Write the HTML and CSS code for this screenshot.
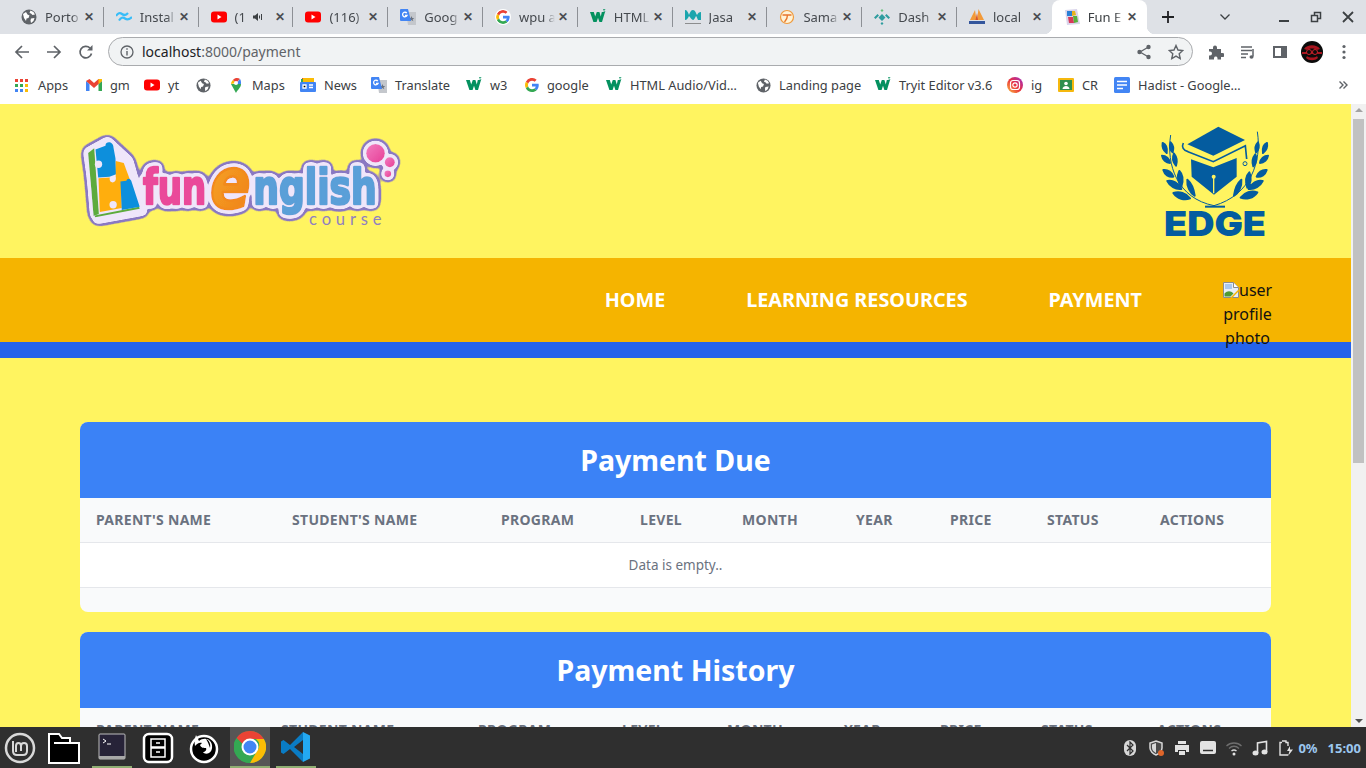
FILE: index.html
```html
<!DOCTYPE html>
<html lang="en">
<head>
    <meta charset="UTF-8">
    <meta name="viewport" content="width=device-width, initial-scale=1.0">
    <title>Fun English Course</title>
    <link rel="stylesheet" href="styles.css">
</head>
<body>
    <svg class="sprite" aria-hidden="true">
        <symbol id="globe" viewBox="0 0 16 16">
            <circle cx="8" cy="8" r="7.5" fill="#5f6368"/>
            <path fill="#fff" d="M2 5l3-2 1.500 2.500 2 1-1 2.500-2 .5-.5 2.500-2-3zM9.500 1.500l3 1.500 1.500 2.500-2.500.5-1.500-1.500-1.500-.5zM10 9.500l3.500-.5-1 3-2.500 2-.5-2.500z"/>
        </symbol>
        <symbol id="yt" viewBox="0 0 16 16">
            <rect y="2.500" width="16" height="11" rx="3" fill="#f00"/>
            <path fill="#fff" d="M6.500 5.500v5l4-2.500z"/>
        </symbol>
        <symbol id="gtranslate" viewBox="0 0 16 16">
            <path fill="#c4c7cc" d="M6 3h10v13H8z"/>
            <path fill="#6b7380" d="M11.500 7l.8 2h2l-1.600 1.300.6 2-1.800-1.200-1.800 1.200.6-2L8.700 9h2z"/>
            <path fill="#4285f4" d="M1 0h7l3 12H1a1 1 0 0 1-1-1V1a1 1 0 0 1 1-1z"/>
            <path fill="none" stroke="#fff" stroke-width="1.300" d="M6.800 4.200A2.300 2.300 0 1 0 7 6.500H5"/>
        </symbol>
        <symbol id="w3" viewBox="0 0 16 16">
            <path fill="#04915f" d="M0 3h3.800l1.400 4.500L6.800 3h2.600l1.400 4.500L11.800 3h3.200L12 13H9.400L8 8.800 6.600 13H3.400z"/>
            <path fill="none" stroke="#04915f" stroke-width=".7" d="M13 .5h2l-1 1 1 1-1 .7h-1"/>
        </symbol>
        <symbol id="google" viewBox="0 0 16 16">
            <path fill="#ea4335" d="M8 3.200c1.200 0 2.200.4 3 1.200l2.300-2.300A7.800 7.800 0 0 0 1 4.300l2.700 2.100C4.300 4.500 6 3.200 8 3.200z"/>
            <path fill="#4285f4" d="M15.700 8.200c0-.6-.1-1.100-.2-1.600H8v3h4.300c-.2 1-.8 1.800-1.600 2.400l2.600 2c1.500-1.400 2.400-3.400 2.400-5.800z"/>
            <path fill="#fbbc05" d="M3.700 9.600A4.800 4.800 0 0 1 3.700 6.400L1 4.300a7.900 7.900 0 0 0 0 7.400z"/>
            <path fill="#34a853" d="M8 16c2.200 0 4-.7 5.300-2l-2.600-2c-.7.500-1.600.8-2.700.8-2 0-3.700-1.300-4.300-3.200L1 11.700A8 8 0 0 0 8 16z"/>
        </symbol>
    </svg>

    <div class="screen">
        <div class="tabstrip">
            <div class="tab"><svg class="favicon"><use href="#globe"/></svg><span class="tab-title">Porto</span><span class="tab-close">✕</span></div>
            <div class="tab">
                <svg class="favicon" viewBox="0 0 16 16"><path fill="none" stroke="#38bdf8" stroke-width="2.200" d="M0 7c2-3 4-3.500 6-2s4 1.500 6-1M3 11.500c2-3 4-3.500 6-2s4 1.500 7-1.500"/></svg>
                <span class="tab-title">Instal</span><span class="tab-close">✕</span>
            </div>
            <div class="tab">
                <svg class="favicon"><use href="#yt"/></svg><span class="tab-title tab-title-short">(1</span>
                <svg class="tab-audio" viewBox="0 0 10 10"><path fill="#3c4043" d="M0 3.500h2L5 1v8L2 6.500H0z"/><path fill="none" stroke="#3c4043" d="M6.500 3.500v3M8.500 2v6"/></svg>
                <span class="tab-close">✕</span>
            </div>
            <div class="tab"><svg class="favicon"><use href="#yt"/></svg><span class="tab-title">(116)</span><span class="tab-close">✕</span></div>
            <div class="tab"><svg class="favicon"><use href="#gtranslate"/></svg><span class="tab-title">Goog</span><span class="tab-close">✕</span></div>
            <div class="tab"><svg class="favicon favicon-chip"><use href="#google"/></svg><span class="tab-title">wpu a</span><span class="tab-close">✕</span></div>
            <div class="tab"><svg class="favicon"><use href="#w3"/></svg><span class="tab-title">HTML</span><span class="tab-close">✕</span></div>
            <div class="tab">
                <svg class="favicon" viewBox="0 0 16 16"><path fill="#1aa5ad" d="M0 1c2 0 3 2 4 5 1-3 2-5 4-5 2 0 3 3 4 5 1-2 2-3 4-3v8h-3c-1-2-1-3-2-4-1 2-2 4-3 4S5 8 4 7c-1 2-2 4-4 4z"/><path stroke="#777" stroke-width=".8" d="M0 14.500h16"/></svg>
                <span class="tab-title">Jasa</span><span class="tab-close">✕</span>
            </div>
            <div class="tab">
                <svg class="favicon" viewBox="0 0 16 16"><circle cx="8" cy="8" r="6.500" fill="#fff3d6" stroke="#ef9a3c" stroke-width="1.200"/><path fill="none" stroke="#e8762c" stroke-width="1.400" d="M3.500 6h9M8.500 6c0 3-1 5-3 7"/></svg>
                <span class="tab-title">Sama</span><span class="tab-close">✕</span>
            </div>
            <div class="tab">
                <svg class="favicon" viewBox="0 0 16 16"><path fill="#2f9d9f" d="M8 5l3.500 3.500L8 12 4.500 8.500zM8 13l1.500 1.500L8 16l-1.500-1.500zM3.500 5L5 6.500 1.500 10 0 8.500zM12.500 5L16 8.500 14.500 10 11 6.500z"/><path fill="#64c07a" d="M8 0l1.500 1.500L8 3 6.500 1.500z"/></svg>
                <span class="tab-title">Dash</span><span class="tab-close">✕</span>
            </div>
            <div class="tab tab-no-sep">
                <svg class="favicon" viewBox="0 0 16 16"><path fill="#f29a3a" d="M1 11L6 1l1.500 10zM8 11L9.500 0 15 11z"/><path fill="#d8562a" d="M6.500 11L8 4l1 7z"/><path fill="#34569c" d="M0 12h16v3H0z"/></svg>
                <span class="tab-title">local</span><span class="tab-close">✕</span>
            </div>
            <div class="tab tab-active">
                <svg class="favicon" viewBox="0 0 16 16"><path fill="#d9d4ea" d="M1 1l12-1 3 15-13 1z"/><path fill="#2a7fd6" d="M3 2h5v5H3z"/><path fill="#e8b21c" d="M8 2l3 0 1 4-4 1z"/><path fill="#d93a5a" d="M4 8h5l1 6H5z"/><path fill="#58b03c" d="M9 7h4l1 6-4 1z"/></svg>
                <span class="tab-title">Fun E</span><span class="tab-close">✕</span>
            </div>
            <svg class="strip-plus" viewBox="0 0 12 12"><path stroke="#202124" stroke-width="1.800" d="M6 0v12M0 6h12"/></svg>
            <div class="window-controls">
                <svg class="win-chevron" viewBox="0 0 10 6"><path fill="none" stroke="#3c4043" stroke-width="1.300" d="M.5.500L5 5 9.500.500"/></svg>
                <svg class="win-btn" viewBox="0 0 12 12"><path stroke="#3c4043" stroke-width="2" d="M1 10h10"/></svg>
                <svg class="win-btn" viewBox="0 0 12 12"><path fill="none" stroke="#3c4043" stroke-width="1.500" d="M1.500 4.500h6v6h-6zM4.500 4V1.500h6v6H8"/></svg>
                <svg class="win-btn" viewBox="0 0 12 12"><path stroke="#3c4043" stroke-width="1.800" d="M1 1l10 10M11 1L1 11"/></svg>
            </div>
        </div>

        <div class="toolbar">
            <svg class="tool-icon" viewBox="0 0 16 16"><path fill="none" stroke="#5f6368" stroke-width="1.700" d="M15 8H2M8 2L2 8l6 6"/></svg>
            <svg class="tool-icon" viewBox="0 0 16 16"><path fill="none" stroke="#5f6368" stroke-width="1.700" d="M1 8h13M8 2l6 6-6 6"/></svg>
            <svg class="tool-icon" viewBox="0 0 16 16"><path fill="none" stroke="#5f6368" stroke-width="1.700" d="M13.500 9.500A5.800 5.800 0 1 1 12 4"/><path fill="#5f6368" d="M14.500 1v5.500H9z"/></svg>
            <div class="omnibox">
                <svg class="omni-info" viewBox="0 0 14 14"><circle cx="7" cy="7" r="6" fill="none" stroke="#5f6368" stroke-width="1.300"/><path stroke="#5f6368" stroke-width="1.400" d="M7 6v4.500M7 3.300v1.500"/></svg>
                <span class="omni-url"><span class="omni-host">localhost</span>:8000/payment</span>
                <svg class="omni-action" viewBox="0 0 16 16"><path fill="none" stroke="#5f6368" stroke-width="1.300" d="M12.500 3L4 8l8.500 5"/><circle cx="12.500" cy="3" r="2.200" fill="#5f6368"/><circle cx="12.500" cy="13" r="2.200" fill="#5f6368"/><circle cx="3.500" cy="8" r="2.200" fill="#5f6368"/></svg>
                <svg class="omni-action" viewBox="0 0 16 16"><path fill="none" stroke="#5f6368" stroke-width="1.400" d="M8 1.500l2 4.500 4.800.5-3.600 3.200 1 4.800L8 12.100l-4.200 2.400 1-4.800L1.200 6.500 6 6z"/></svg>
            </div>
            <svg class="tool-icon tool-icon-first" viewBox="0 0 16 16"><path fill="#5f6368" d="M1 5h4V3.500a2 2 0 0 1 4 0V5h4v4h1.500a2 2 0 0 1 0 4H13v2.500H9.500V14a1.800 1.800 0 0 0-3.500 0v1.500H1v-4h1a2 2 0 0 0 0-4H1z"/></svg>
            <svg class="tool-icon" viewBox="0 0 16 16"><path stroke="#5f6368" stroke-width="1.400" d="M1 3h11M1 6.500h11M1 10h7M1 13.500h5"/><path fill="none" stroke="#5f6368" stroke-width="1.500" d="M13 5v7.500"/><ellipse cx="11.500" cy="13" rx="2" ry="1.700" fill="#5f6368"/></svg>
            <svg class="tool-icon" viewBox="0 0 16 16"><path fill="none" stroke="#5f6368" stroke-width="2" d="M2 3h12v10H2z"/><path fill="#5f6368" d="M9 3h5v10H9z"/></svg>
            <svg class="tool-avatar" viewBox="0 0 22 22"><circle cx="11" cy="11" r="11" fill="#0b0b0b"/><path fill="#a9141e" d="M3 8c3-5 13-5 16 0l-3 1c-2-2-8-2-10 0zM1 11h20v2H1zM6 15c2 2 8 2 10 0l1 2c-3 3-9 3-12 0z"/><circle cx="8" cy="11" r="2.500" fill="#0b0b0b" stroke="#c8202a"/><circle cx="14" cy="11" r="2.500" fill="#0b0b0b" stroke="#c8202a"/></svg>
            <svg class="tool-icon" viewBox="0 0 16 16"><circle cx="8" cy="2.500" r="1.600" fill="#5f6368"/><circle cx="8" cy="8" r="1.600" fill="#5f6368"/><circle cx="8" cy="13.500" r="1.600" fill="#5f6368"/></svg>
        </div>

        <div class="bookmarks">
            <div class="bm">
                <svg class="bm-icon bm-icon-small" viewBox="0 0 13 13"><path fill="#ea4335" d="M0 0h3v3H0zM5 0h3v3H5zM10 0h3v3h-3z"/><path fill="#34a853" d="M0 5h3v3H0zM5 5h3v3H5z"/><path fill="#fbbc05" d="M10 5h3v3h-3zM10 10h3v3h-3z"/><path fill="#4285f4" d="M0 10h3v3H0zM5 10h3v3H5z"/></svg>
                <span>Apps</span>
            </div>
            <div class="bm">
                <svg class="bm-icon" viewBox="0 0 16 16"><path fill="#4285f4" d="M0 4v10h3.500V7z"/><path fill="#34a853" d="M12.500 7v7H16V4z"/><path fill="#ea4335" d="M0 4l3.500-2L8 6l4.500-4L16 4l-3.500 3L8 11 3.500 7z"/><path fill="#fbbc05" d="M12.500 2L16 2v2l-3.500 3z"/></svg>
                <span>gm</span>
            </div>
            <div class="bm"><svg class="bm-icon"><use href="#yt"/></svg><span>yt</span></div>
            <div class="bm"><svg class="bm-icon bm-icon-globe"><use href="#globe"/></svg></div>
            <div class="bm">
                <svg class="bm-icon" viewBox="0 0 16 16"><path fill="#34a853" d="M3 7l5 9c1-3 5-5 5-9z"/><path fill="#fbbc05" d="M3 7c0-2 1-3 2-4l3 3z"/><path fill="#ea4335" d="M5 3c2-2.500 5-2.500 7-1L8 6z"/><path fill="#4285f4" d="M12 2c1 1 1 3 1 5H8z"/><circle cx="8" cy="6" r="2" fill="#fff"/></svg>
                <span>Maps</span>
            </div>
            <div class="bm">
                <svg class="bm-icon" viewBox="0 0 16 16"><path fill="#ea4335" d="M2 1h10l1 3H2z"/><path fill="#34a853" d="M1 2h12v3H1z"/><path fill="#fbbc05" d="M3 1h11v5H3z"/><rect y="5" width="16" height="10" rx="1" fill="#4285f4"/><path stroke="#fff" stroke-width="1.300" d="M9 8h4M9 10.500h4M3 8h3v3H3z"/></svg>
                <span>News</span>
            </div>
            <div class="bm"><svg class="bm-icon"><use href="#gtranslate"/></svg><span>Translate</span></div>
            <div class="bm"><svg class="bm-icon"><use href="#w3"/></svg><span>w3</span></div>
            <div class="bm"><svg class="bm-icon bm-icon-google"><use href="#google"/></svg><span>google</span></div>
            <div class="bm"><svg class="bm-icon"><use href="#w3"/></svg><span>HTML Audio/Vid…</span></div>
            <div class="bm"><svg class="bm-icon bm-icon-globe"><use href="#globe"/></svg><span>Landing page</span></div>
            <div class="bm"><svg class="bm-icon"><use href="#w3"/></svg><span>Tryit Editor v3.6</span></div>
            <div class="bm">
                <svg class="bm-icon" viewBox="0 0 16 16"><defs><linearGradient id="ig" x1="0" y1="1" x2="1" y2="0"><stop offset="0" stop-color="#fdc13c"/><stop offset=".5" stop-color="#e8303e"/><stop offset="1" stop-color="#9b2fd0"/></linearGradient></defs><circle cx="8" cy="8" r="8" fill="url(#ig)"/><rect x="3.500" y="3.500" width="9" height="9" rx="2.500" fill="none" stroke="#fff" stroke-width="1.200"/><circle cx="8" cy="8" r="2.200" fill="none" stroke="#fff" stroke-width="1.200"/></svg>
                <span>ig</span>
            </div>
            <div class="bm">
                <svg class="bm-icon" viewBox="0 0 16 16"><rect width="16" height="14" y="1" rx="1" fill="#f5b80e"/><rect x="2" y="3" width="12" height="10" fill="#2f8f4e"/><circle cx="8" cy="6.500" r="1.800" fill="#fff"/><path fill="#fff" d="M4.500 12c0-2 2-3 3.500-3s3.500 1 3.500 3z"/></svg>
                <span>CR</span>
            </div>
            <div class="bm">
                <svg class="bm-icon" viewBox="0 0 16 16"><rect width="16" height="16" rx="1.500" fill="#4285f4"/><path stroke="#fff" stroke-width="1.600" d="M3 4.500h10M3 8h10M3 11.500h6"/></svg>
                <span>Hadist - Google…</span>
            </div>
            <svg class="bm-more" viewBox="0 0 9 8"><path fill="none" stroke="#5f6368" stroke-width="1.400" d="M.5.500L4 4 .5 7.500M4.500.500L8 4 4.500 7.500"/></svg>
        </div>

        <div class="viewport">
            <div class="page">
                <header class="site-header">
                    <svg class="logo-fun" viewBox="30 30 960 280">
                        <defs>
                            <filter id="logo-outline" filterUnits="userSpaceOnUse" x="0" y="0" width="1020" height="345">
                                <feGaussianBlur in="SourceAlpha" stdDeviation="7" result="b1"/>
                                <feComponentTransfer in="b1" result="inner"><feFuncA type="linear" slope="30" intercept="-1"/></feComponentTransfer>
                                <feGaussianBlur in="SourceAlpha" stdDeviation="11" result="b2"/>
                                <feComponentTransfer in="b2" result="outer"><feFuncA type="linear" slope="30" intercept="-0.6"/></feComponentTransfer>
                                <feFlood flood-color="#8a78c2"/>
                                <feComposite in2="outer" operator="in" result="purple"/>
                                <feFlood flood-color="#efe6fa"/>
                                <feComposite in2="inner" operator="in" result="lilac"/>
                                <feMerge><feMergeNode in="purple"/><feMergeNode in="lilac"/><feMergeNode in="SourceGraphic"/></feMerge>
                            </filter>
                            <linearGradient id="logo-orange" x1="0" y1="0" x2="1" y2="1"><stop offset="0" stop-color="#f7a823"/><stop offset="1" stop-color="#ee7e1c"/></linearGradient>
                            <linearGradient id="logo-pink" x1="0" y1="0" x2="1" y2="1"><stop offset="0" stop-color="#f27cc0"/><stop offset="1" stop-color="#e73f96"/></linearGradient>
                        </defs>
                        <g filter="url(#logo-outline)">
                            <path fill="#efe6fa" d="M48 80L112 44 178 105 222 262 78 288z"/>
                            <path fill="#5cab3c" d="M53 84l18-14 14 198-16 6z"/>
                            <path fill="#5cab3c" d="M72 272l134-26 2 6-134 26z"/>
                            <path fill="#0d8fdc" d="M75 74l30-12c0-14 24-14 24 6l6 32 2 48-20 8-34 2z"/>
                            <path fill="#ffae0c" d="M84 160l34-2c-4 20 22 20 18-2l16-2 2 96-66 12z"/>
                            <path fill="#ffae0c" d="M136 108l24 6 22 60-28 0-18-20z"/>
                            <path fill="#0d8fdc" d="M150 170l18-2c2-10 14-8 16 4l24 74-54 10z"/>
                            <circle cx="84" cy="118" r="11" fill="#efe6fa"/>
                            <circle cx="128" cy="240" r="11" fill="#efe6fa"/>
                            <text class="logo-word logo-word-pink" x="218" y="238" textLength="190" lengthAdjust="spacingAndGlyphs">fun</text>
                            <text class="logo-word logo-word-e" x="420" y="250" textLength="122" lengthAdjust="spacingAndGlyphs">e</text>
                            <text class="logo-word logo-word-blue" x="550" y="238" textLength="372" lengthAdjust="spacingAndGlyphs">nglish</text>
                            <circle cx="918" cy="85" r="28" fill="url(#logo-pink)"/>
                            <circle cx="961" cy="112" r="15" fill="url(#logo-pink)"/>
                            <circle cx="955" cy="147" r="10" fill="url(#logo-pink)"/>
                        </g>
                        <text class="logo-course" x="718" y="300" textLength="218">course</text>
                    </svg>
                    <svg class="logo-edge" viewBox="60 30 330 336">
                        <g fill="#045c9f">
                            <path d="M235 35l80 40-95 47-78-34z"/>
                            <path d="M153 133l67 24 70-28v56l-68 54-67-54z"/>
                            <path fill="none" stroke="#045c9f" stroke-width="5" d="M130 84c-6 12 0 22 14 26l76 30 96-48 4 40"/>
                            <circle cx="315" cy="146" r="6" fill="none" stroke="#045c9f" stroke-width="3"/>
                            <path fill="none" stroke="#fff460" stroke-width="4" d="M221 187v48"/>
                            <circle cx="221" cy="185" r="6" fill="#fff460"/>
                            <path fill="none" stroke="#045c9f" stroke-width="3" d="M92 60c-14 90 20 190 130 212"/>
                            <path class="laurel" d="M68 84c12 6 14 18 12 30-8-6-14-18-12-30zM92 82c8 8 10 16 6 30-8-8-10-20-6-30zM66 122c12 0 22 10 24 22-12 0-22-10-24-22zM102 116c8 10 10 24 6 36-8-10-12-24-6-36zM70 165c14-2 26 8 30 20-14 2-26-6-30-20zM118 168c10 10 12 28 6 46-10-12-14-30-6-46zM82 198c16-4 34 6 42 24-18 2-34-8-42-24zM142 194c14 12 20 32 22 48-14-8-24-28-22-48zM100 234c18-6 38 0 50 16-16 6-38 2-50-16z"/>
                            <path fill="none" stroke="#045c9f" stroke-width="3" d="M352 50c14 90-20 190-130 222"/>
                            <path class="laurel" d="M381 84c-12 6-14 18-12 30 8-6 14-18 12-30zM354 82c-8 8-10 16-6 30 8-8 10-20 6-30zM384 122c-12 0-22 10-24 22 12 0 22-10 24-22zM346 118c-8 10-10 24-6 36 8-10 12-24 6-36zM380 165c-14-2-26 8-30 20 14 2 26-6 30-20zM328 172c-10 10-12 28-6 46 10-12 14-30 6-46zM368 198c-16-4-34 6-42 24 18 2 34-8 42-24zM304 194c-14 12-20 32-22 48 14-8 24-28 22-48zM352 232c-18-6-38 0-50 16 16 6 38 2 50-16z"/>
                            <path d="M195 272h60v6h-60z"/>
                        </g>
                        <text class="logo-edge-text" x="72" y="362" textLength="306" lengthAdjust="spacingAndGlyphs">EDGE</text>
                    </svg>
                </header>

                <nav class="site-nav">
                    <a href="#">HOME</a>
                    <a href="#">LEARNING RESOURCES</a>
                    <a href="#">PAYMENT</a>
                    <span class="profile-alt">
                        <span class="profile-alt-first"><svg class="broken-img" viewBox="0 0 16 16"><path fill="#e8eef6" stroke="#8c8c8c" d="M.5.500h10l5 5v10H.5z"/><path fill="#fff" stroke="#8c8c8c" d="M10.500.5v5h5"/><path fill="#a9c8ee" d="M2 2h7v5H2z"/><path fill="#4f9a34" d="M1.500 14.500v-3c3-3 6-3 9 0l-3 3z"/><path stroke="#f5b400" stroke-width="1.500" d="M8 16L16 8"/></svg>user</span> profile photo
                    </span>
                </nav>

                <main class="content">
                    <section class="card">
                        <h2 class="card-title">Payment Due</h2>
                        <table class="data-table due-table">
                            <colgroup>
                                <col class="c1"><col class="c2"><col class="c3"><col class="c4"><col class="c5"><col class="c6"><col class="c7"><col class="c8"><col class="c9">
                            </colgroup>
                            <thead>
                                <tr>
                                    <th>Parent's Name</th>
                                    <th>Student's Name</th>
                                    <th>Program</th>
                                    <th>Level</th>
                                    <th>Month</th>
                                    <th>Year</th>
                                    <th>Price</th>
                                    <th>Status</th>
                                    <th>Actions</th>
                                </tr>
                            </thead>
                            <tbody>
                                <tr><td colspan="9">Data is empty..</td></tr>
                            </tbody>
                        </table>
                        <div class="card-foot"></div>
                    </section>

                    <section class="card">
                        <h2 class="card-title">Payment History</h2>
                        <table class="data-table history-table">
                            <colgroup>
                                <col class="c1"><col class="c2"><col class="c3"><col class="c4"><col class="c5"><col class="c6"><col class="c7"><col class="c8"><col class="c9">
                            </colgroup>
                            <thead>
                                <tr>
                                    <th>Parent Name</th>
                                    <th>Student Name</th>
                                    <th>Program</th>
                                    <th>Level</th>
                                    <th>Month</th>
                                    <th>Year</th>
                                    <th>Price</th>
                                    <th>Status</th>
                                    <th>Actions</th>
                                </tr>
                            </thead>
                        </table>
                    </section>
                </main>
            </div>
            <div class="scrollbar">
                <span class="scroll-arrow scroll-arrow-up"></span>
                <span class="scroll-thumb"></span>
                <span class="scroll-arrow scroll-arrow-down"></span>
            </div>
        </div>

        <div class="taskbar">
            <div class="task-item">
                <svg class="task-icon" viewBox="0 0 32 32"><circle cx="16" cy="16" r="14" fill="none" stroke="#d8d8d8" stroke-width="2.500"/><path fill="none" stroke="#d8d8d8" stroke-width="2" d="M9 9v10c0 3 2 4 4 4h6c3 0 4-2 4-4v-5c0-4-6-4-6 0v5M17 14c0-4-5-4-5 0v6"/></svg>
            </div>
            <div class="task-item task-folder">
                <svg class="task-icon" viewBox="0 0 32 32"><path fill="#000" stroke="#fff" stroke-width="2" d="M1 2h10l3 4h8v5h9v20H1z"/><path fill="none" stroke="#fff" stroke-width="2" d="M6 11h25"/></svg>
            </div>
            <div class="task-item task-open">
                <svg class="task-icon" viewBox="0 0 32 32"><rect x="3" y="3" width="26" height="25" rx="1" fill="#272338" stroke="#bdbdbd"/><path fill="#a8a8a8" d="M3 25h26v3H3z"/><path fill="none" stroke="#fff" d="M7 8l3 2-3 2M11 13h4"/></svg>
            </div>
            <div class="task-item">
                <svg class="task-icon" viewBox="0 0 32 32"><rect x="2" y="2" width="28" height="28" rx="5" fill="#000" stroke="#fff" stroke-width="2.500"/><path fill="none" stroke="#fff" stroke-width="1.500" d="M9 7h14v8H9zM9 16h14v9H9zM14 11h4M14 20h4"/></svg>
            </div>
            <div class="task-item">
                <svg class="task-icon" viewBox="0 0 32 32"><circle cx="16" cy="17" r="13" fill="#000" stroke="#fff" stroke-width="2.500"/><path fill="#fff" d="M8 3l3 6c3-3 9-3 11 0 3 3 3 10-1 12-2 1-5 1-6-1 2 0 4-2 3-4-2 0-5 0-6-3l2-2c-3-1-5 1-7 3-1-4 0-8 1-11z"/><path fill="#000" d="M18 7c3 1 5 5 4 9-1-3-2-6-4-9z"/></svg>
            </div>
            <div class="task-item task-open task-active">
                <svg class="task-icon" viewBox="0 0 32 32"><circle cx="16" cy="16" r="16" fill="#34a853"/><path fill="#ea4335" d="M16 0a16 16 0 0 1 13.900 8H16a8 8 0 0 0-7.500 5L2.500 7A16 16 0 0 1 16 0z"/><path fill="#fbbc05" d="M29.900 8A16 16 0 0 1 16 32l7-12a8 8 0 0 0-1-12z"/><path fill="#34a853" d="M2.500 7l6 6a8 8 0 0 0 9 11L16 32A16 16 0 0 1 2.500 7z"/><circle cx="16" cy="16" r="7.500" fill="#4285f4" stroke="#fff" stroke-width="2"/></svg>
            </div>
            <div class="task-item task-open">
                <svg class="task-icon" viewBox="0 0 32 32"><path fill="#0a7cc4" d="M23 1L10 14 3.500 9 1 10.500v11L3.500 23 10 18l13 13zM23 9v14l-9-7z"/><path fill="#23a9f2" d="M23 1l7 3.500v23L23 31z"/></svg>
            </div>
            <div class="tray">
                <svg class="tray-icon" viewBox="0 0 12 16"><rect width="12" height="16" rx="6" fill="#d8d8d8"/><path fill="none" stroke="#2f2f2f" stroke-width="1.200" d="M3 5l6 6-3 3V2l3 3-6 6"/></svg>
                <svg class="tray-icon" viewBox="0 0 16 16"><path fill="#4a4a4a" stroke="#d8d8d8" stroke-width="1.500" d="M8 1l6 2v5c0 3-3 6-6 7-3-1-6-4-6-7V3z"/><path fill="#d8d8d8" d="M8 3v10c-2-1-4-3-4-5V4.500z"/><circle cx="13" cy="13" r="3" fill="#e0662a"/></svg>
                <svg class="tray-icon" viewBox="0 0 16 16"><path fill="#e2e2e2" d="M4 1h8v3H4zM1 5h14v7h-3v-2H4v2H1zM5 11h6v4H5z"/></svg>
                <svg class="tray-icon" viewBox="0 0 16 16"><rect y="1" width="16" height="13" rx="2" fill="#e2e2e2"/><path stroke="#2f2f2f" stroke-width="1.500" d="M3 10.500h10"/></svg>
                <svg class="tray-icon" viewBox="0 0 16 16"><path fill="none" stroke="#6e6e6e" stroke-width="1.300" d="M.5 6c4-4 11-4 15 0M3 8.500c3-3 7-3 10 0"/><path fill="none" stroke="#d8d8d8" stroke-width="1.500" d="M5.500 11c1.500-1.200 3.500-1.200 5 0"/><circle cx="8" cy="14" r="1.500" fill="#e2e2e2"/></svg>
                <svg class="tray-icon" viewBox="0 0 16 16"><path fill="none" stroke="#e2e2e2" stroke-width="1.600" d="M5.500 13V3l9-1.500V12"/><ellipse cx="3.500" cy="13" rx="3" ry="2.500" fill="#e2e2e2"/><ellipse cx="12.500" cy="12" rx="3" ry="2.500" fill="#e2e2e2"/></svg>
                <svg class="tray-icon" viewBox="0 0 14 16"><path fill="none" stroke="#e2e2e2" stroke-width="1.400" d="M3 1h4v1.500h2V6M9 15H1V2.500h2"/><path fill="#e2e2e2" d="M11 6l-3 5h2.500L9 16l5-6.500h-3z"/></svg>
                <span class="tray-text tray-percent">0%</span>
                <span class="tray-text tray-time">15:00</span>
            </div>
        </div>
    </div>
</body>
</html>
```
FILE: styles.css
```css
* {
    box-sizing: border-box;
}

html, body {
    margin: 0;
    padding: 0;
    height: 100%;
    overflow: hidden;
}

body {
    font-family: "Noto Sans", "Open Sans", sans-serif;
    background-color: #2f2f2f;
}

.sprite {
    display: none;
}

.screen {
    display: flex;
    flex-direction: column;
    width: 1366px;
    height: 768px;
    overflow: hidden;
}

/* browser tabs */
.tabstrip {
    display: flex;
    align-items: center;
    flex: 0 0 34px;
    padding-left: 9px;
    background-color: #dee1e6;
}

.tab {
    position: relative;
    display: flex;
    align-items: center;
    flex: 0 0 94.8px;
    min-width: 0;
    height: 34px;
    padding: 0 7px 0 12px;
    font-size: 13px;
    color: #45494e;
}

.tab::after {
    content: "";
    position: absolute;
    right: 0;
    top: 7px;
    width: 1px;
    height: 20px;
    background-color: #8d9095;
}

.tab-no-sep::after {
    display: none;
}

.tab-active {
    background-color: #fff;
    border-radius: 8px 8px 0 0;
    color: #3c4043;
}

/* the two small flares at the foot of the open tab */
.tab-active::before,
.tab-active::after {
    content: "";
    position: absolute;
    top: auto;
    bottom: 0;
    width: 8px;
    height: 8px;
    background-color: transparent;
}

.tab-active::before {
    left: -8px;
    background-image: radial-gradient(circle at 0 0, transparent 8px, #fff 8.5px);
}

.tab-active::after {
    right: -8px;
    background-image: radial-gradient(circle at 100% 0, transparent 8px, #fff 8.5px);
}

.favicon {
    flex: 0 0 16px;
    width: 16px;
    height: 16px;
}

.favicon-chip {
    padding: 1px;
    background-color: #fff;
    border-radius: 50%;
}

.tab-title {
    flex: 1;
    min-width: 0;
    margin-left: 8px;
    overflow: hidden;
    white-space: nowrap;
    -webkit-mask-image: linear-gradient(90deg, #000 75%, transparent);
    mask-image: linear-gradient(90deg, #000 75%, transparent);
}

.tab-title-short {
    flex: 0 0 12px;
}

.tab-audio {
    flex: 0 0 10px;
    width: 10px;
    height: 10px;
    margin: 0 9px 0 6px;
}

.tab-close {
    flex: 0 0 16px;
    font-size: 12px;
    font-weight: 700;
    line-height: 16px;
    text-align: center;
    color: #4a4d52;
}

.strip-plus {
    width: 12px;
    height: 12px;
    margin-left: 15px;
}

.window-controls {
    display: flex;
    align-items: center;
    margin-left: auto;
    padding-right: 12px;
}

.win-chevron {
    width: 10px;
    height: 6px;
    margin-right: 28px;
}

.win-btn {
    width: 12px;
    height: 12px;
    margin-left: 20px;
}

/* address bar */
.toolbar {
    display: flex;
    align-items: center;
    flex: 0 0 35px;
    padding-left: 14px;
    background-color: #fff;
}

.tool-icon {
    flex: 0 0 16px;
    width: 16px;
    height: 16px;
    margin-right: 16px;
}

.tool-icon-first {
    margin-left: 15px;
}

.tool-avatar {
    flex: 0 0 22px;
    width: 22px;
    height: 22px;
    margin: 0 13px 0 -3px;
}

.omnibox {
    display: flex;
    align-items: center;
    flex: 0 0 1085px;
    height: 29px;
    margin-left: -2px;
    padding: 0 8px 0 11px;
    background-color: #f1f3f4;
    border: 1px solid #a9abae;
    border-radius: 15px;
}

.omni-info {
    width: 14px;
    height: 14px;
    margin-right: 8px;
}

.omni-url {
    flex: 1;
    font-size: 14px;
    color: #5f6368;
}

.omni-host {
    color: #202124;
}

.omni-action {
    width: 16px;
    height: 16px;
    margin-left: 16px;
}

/* bookmarks */
.bookmarks {
    display: grid;
    grid-template-columns: 71px 58px 52px 32px 72px 71px 95px 59px 81px 150px 119px 132px 51px 56px 130px auto;
    align-items: center;
    flex: 0 0 35px;
    padding: 0 0 3px 15px;
    font-size: 12.8px;
    background-color: #fff;
    color: #3c4043;
}

.bm {
    display: flex;
    align-items: center;
    white-space: nowrap;
}

.bm-icon {
    flex: 0 0 16px;
    width: 16px;
    height: 16px;
    margin-right: 8px;
}

.bm-icon-small {
    flex-basis: 13px;
    width: 13px;
    height: 13px;
    margin-right: 10px;
}

.bm-icon-globe {
    flex-basis: 15px;
    width: 15px;
    height: 15px;
}

.bm-icon-google {
    flex-basis: 14px;
    width: 14px;
    height: 14px;
}

.bm-more {
    justify-self: start;
    width: 9px;
    height: 8px;
    margin-left: 95px;
}

/* page */
.viewport {
    display: flex;
    flex: 1;
    min-height: 0;
}

.page {
    flex: 1;
    min-width: 0;
    overflow: hidden;
    background-color: #fff460;
}

.site-header {
    display: flex;
    align-items: center;
    justify-content: space-between;
    height: 154px;
    padding: 0 81px 0 80px;
}

.logo-fun {
    width: 320px;
    height: 93px;
    overflow: visible;
}

.logo-word {
    font-family: "DejaVu Sans", sans-serif;
    font-weight: 700;
    font-size: 145px;
    stroke-width: 8px;
    stroke-linejoin: round;
}

.logo-word-pink {
    fill: #ea4a9a;
    stroke: #ea4a9a;
}

.logo-word-e {
    font-size: 215px;
    font-style: italic;
    fill: url(#logo-orange);
    stroke: #f28a1a;
}

.logo-word-blue {
    fill: #5a9fd8;
    stroke: #5a9fd8;
}

.logo-course {
    font-family: "Lato", sans-serif;
    font-size: 50px;
    fill: #8f80c0;
}

.logo-edge {
    width: 110px;
    height: 112px;
}

.laurel {
    stroke: #045c9f;
    stroke-width: 6px;
    stroke-linejoin: round;
}

.logo-edge-text {
    font-family: "Inter", sans-serif;
    font-weight: 900;
    font-size: 104px;
    fill: #045c9f;
}

.site-nav {
    display: flex;
    align-items: center;
    justify-content: flex-end;
    gap: 81px;
    height: 100px;
    padding: 0 79px 0 80px;
    background-color: #f5b400;
    border-bottom: 16px solid #2563eb;
}

.site-nav a {
    margin-top: -2px;
    font-size: 19.8px;
    font-weight: 700;
    color: #fff;
    text-decoration: none;
}

.profile-alt {
    width: 49px;
    height: 44px;
    font-size: 16px;
    line-height: 24px;
    text-align: center;
    color: #111;
}

.profile-alt-first {
    white-space: nowrap;
}

.broken-img {
    width: 16px;
    height: 16px;
    vertical-align: -2px;
}

.content {
    display: flex;
    flex-direction: column;
    gap: 20px;
    padding: 64px 80px 0;
}

.card {
    overflow: hidden;
    background-color: #f9fafb;
    border-radius: 8px;
}

.card-title {
    margin: 0;
    height: 76px;
    font-size: 28.5px;
    font-weight: 700;
    line-height: 76px;
    text-align: center;
    color: #fff;
    background-color: #3b82f6;
}

.data-table {
    width: 100%;
    border-collapse: collapse;
    table-layout: fixed;
}

.data-table th {
    height: 44px;
    padding: 0 0 0 16px;
    font-size: 14px;
    font-weight: 700;
    letter-spacing: .3px;
    text-align: left;
    text-transform: uppercase;
    white-space: nowrap;
    color: #6b7280;
    background-color: #f9fafb;
    border-bottom: 1px solid #e5e7eb;
}

.data-table td {
    height: 45px;
    padding: 0;
    font-size: 13.5px;
    text-align: center;
    color: #6b7280;
    background-color: #fff;
    border-bottom: 1px solid #e5e7eb;
}

.due-table .c1 { width: 196px; }
.due-table .c2 { width: 209px; }
.due-table .c3 { width: 139px; }
.due-table .c4 { width: 102px; }
.due-table .c5 { width: 114px; }
.due-table .c6 { width: 94px; }
.due-table .c7 { width: 97px; }
.due-table .c8 { width: 113px; }
.due-table .c9 { width: 127px; }

.history-table .c1 { width: 185px; }
.history-table .c2 { width: 197px; }
.history-table .c3 { width: 144px; }
.history-table .c4 { width: 105px; }
.history-table .c5 { width: 117px; }
.history-table .c6 { width: 96px; }
.history-table .c7 { width: 101px; }
.history-table .c8 { width: 116px; }
.history-table .c9 { width: 130px; }

.card-foot {
    height: 24px;
}

/* fake scrollbar, the shot has the real one */
.scrollbar {
    display: flex;
    flex-direction: column;
    align-items: center;
    flex: 0 0 15px;
    background-color: #f1f1f1;
}

.scroll-arrow {
    width: 0;
    height: 0;
    margin: 4px 0;
    border-left: 4px solid transparent;
    border-right: 4px solid transparent;
}

.scroll-arrow-up {
    border-bottom: 4px solid #a3a3a3;
}

.scroll-arrow-down {
    margin-top: auto;
    border-top: 4px solid #505050;
}

.scroll-thumb {
    width: 11px;
    height: 344px;
    margin-top: 3px;
    background-color: #c1c1c1;
}

/* desktop panel */
.taskbar {
    display: flex;
    align-items: center;
    gap: 6px;
    flex: 0 0 41px;
    background-color: #2f2f2f;
}

.task-item {
    display: flex;
    align-items: center;
    justify-content: center;
    flex: 0 0 40px;
    height: 41px;
}

.task-folder {
    margin: 0 2px 0 -2px;
}

.task-open {
    border-bottom: 2px solid #8fae72;
}

.task-active {
    background-color: #565656;
}

.task-icon {
    width: 32px;
    height: 32px;
}

.tray {
    display: flex;
    align-items: center;
    gap: 10px;
    margin-left: auto;
    padding-right: 5px;
}

.tray-icon {
    width: 16px;
    height: 16px;
}

.tray-text {
    font-size: 13px;
    font-weight: 700;
    color: #9cc7ef;
}

.tray-percent {
    margin-left: -6px;
}
```
